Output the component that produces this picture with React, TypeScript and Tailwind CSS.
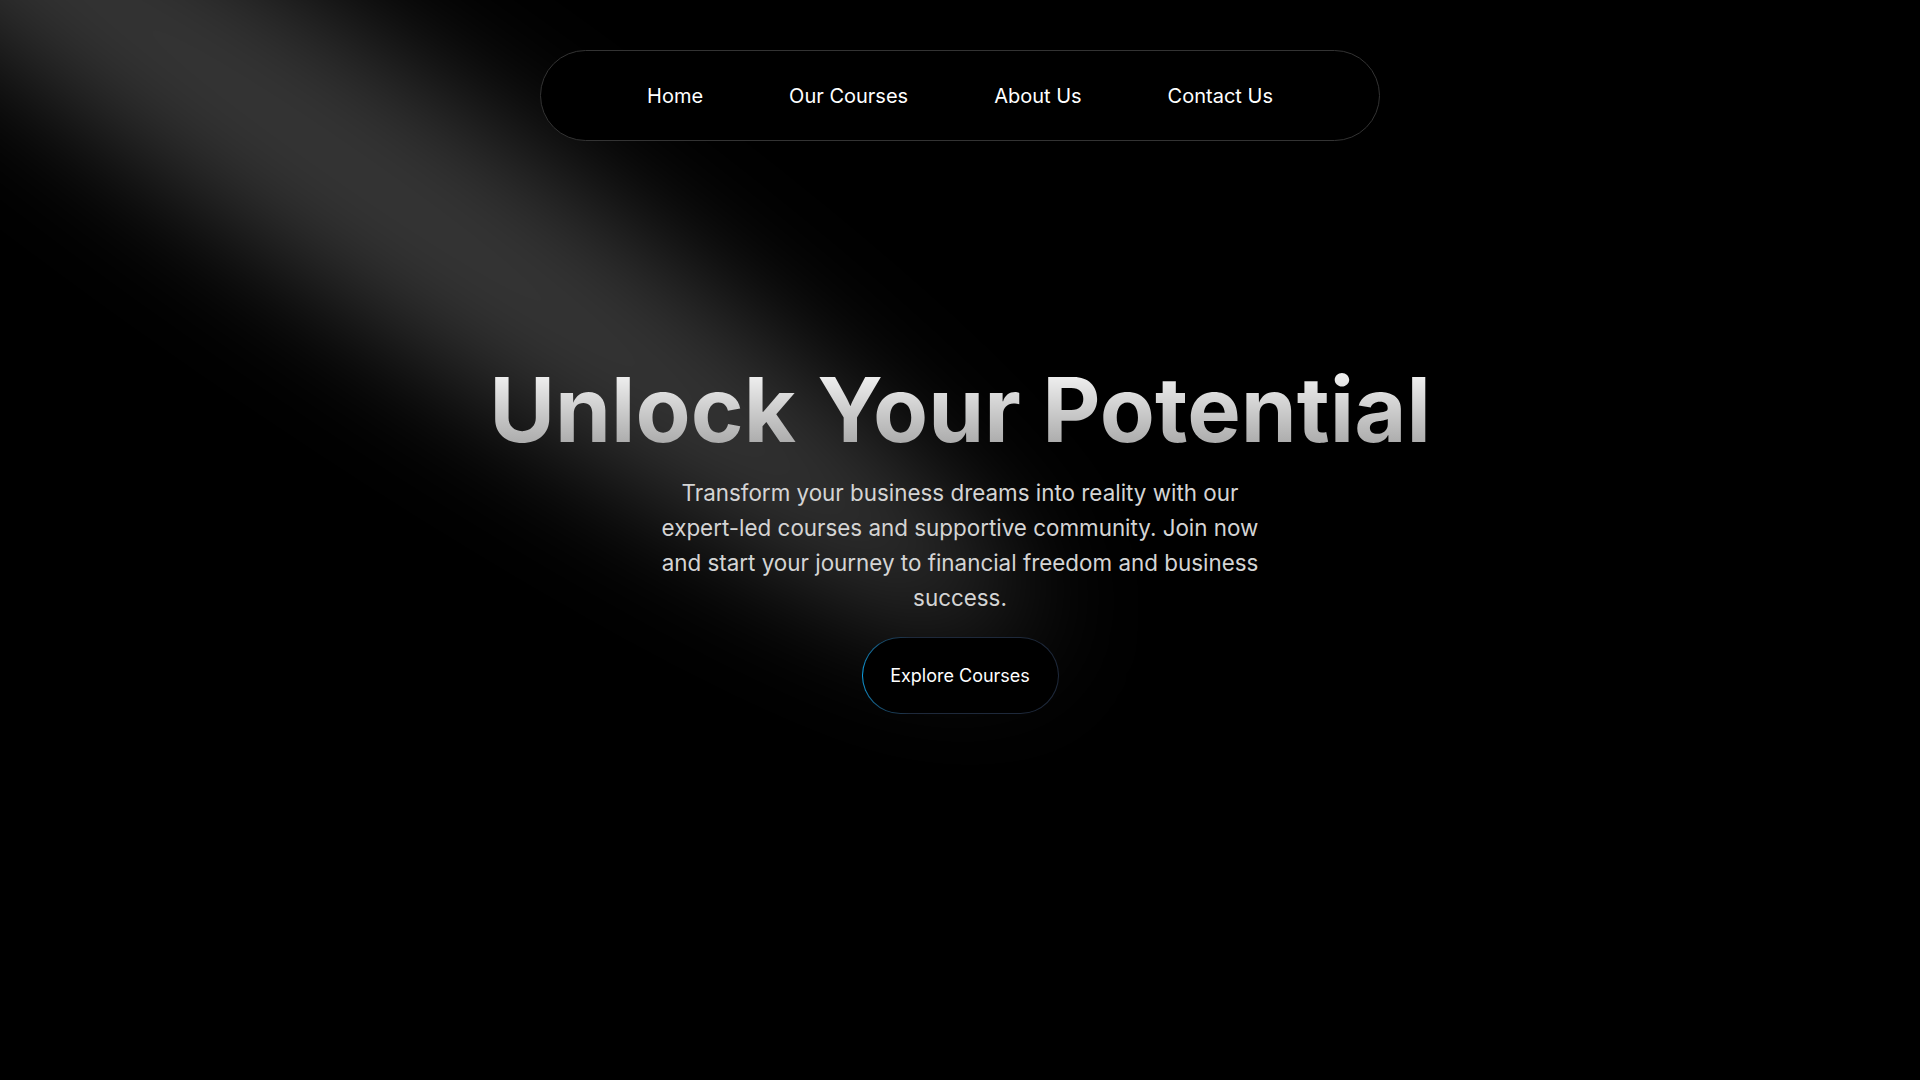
import React from "react";

const links = ["Home", "Our Courses", "About Us", "Contact Us"];

function Spotlight() {
  return (
    <svg
      className="pointer-events-none absolute left-[-460px] top-[-440px] z-0 h-[1211px] w-[1613px]"
      viewBox="0 0 3787 2842"
      fill="none"
    >
      <g filter="url(#spot-blur)">
        <ellipse
          cx="1924.71"
          cy="273.501"
          rx="1924.71"
          ry="273.501"
          transform="matrix(-0.822377 -0.568943 -0.568943 0.822377 3631.88 2291.09)"
          fill="white"
          fillOpacity="0.21"
        />
      </g>
      <defs>
        <filter
          id="spot-blur"
          x="0.860352"
          y="0.838989"
          width="3785.16"
          height="2840.26"
          filterUnits="userSpaceOnUse"
          colorInterpolationFilters="sRGB"
        >
          <feFlood floodOpacity="0" result="BackgroundImageFix" />
          <feBlend mode="normal" in="SourceGraphic" in2="BackgroundImageFix" result="shape" />
          <feGaussianBlur stdDeviation="151" result="blur" />
        </filter>
      </defs>
    </svg>
  );
}

export default function App() {
  return (
    <div className="relative min-h-screen w-full overflow-hidden bg-black font-['Inter',sans-serif] antialiased">
      <Spotlight />

      <div className="relative z-10 flex flex-col items-center">
        <nav className="mt-[50px] flex h-[91px] w-[840px] items-center justify-center gap-[86px] rounded-full border border-[#333] bg-black">
          {links.map((l) => (
            <a key={l} href="#" className="text-[20px] text-white">
              {l}
            </a>
          ))}
        </nav>

        <h1 className="mt-[224px] bg-gradient-to-b from-neutral-50 to-neutral-400 bg-clip-text text-[90px] font-bold leading-none text-transparent">
          Unlock Your Potential
        </h1>

        <p className="mt-[20px] max-w-[620px] text-center text-[22.4px] leading-[35px] text-neutral-300">
          Transform your business dreams into reality with our expert-led courses and supportive community. Join now
          and start your journey to financial freedom and business success.
        </p>

        <div className="mt-[22px] rounded-full bg-[radial-gradient(35%_70%_at_0%_50%,#0ea5e9_0%,rgba(14,165,233,0)_100%),linear-gradient(#1e293b,#1e293b)] p-px">
          <button className="h-[75px] w-[195px] rounded-full bg-black text-[18px] text-white">
            Explore Courses
          </button>
        </div>
      </div>
    </div>
  );
}
